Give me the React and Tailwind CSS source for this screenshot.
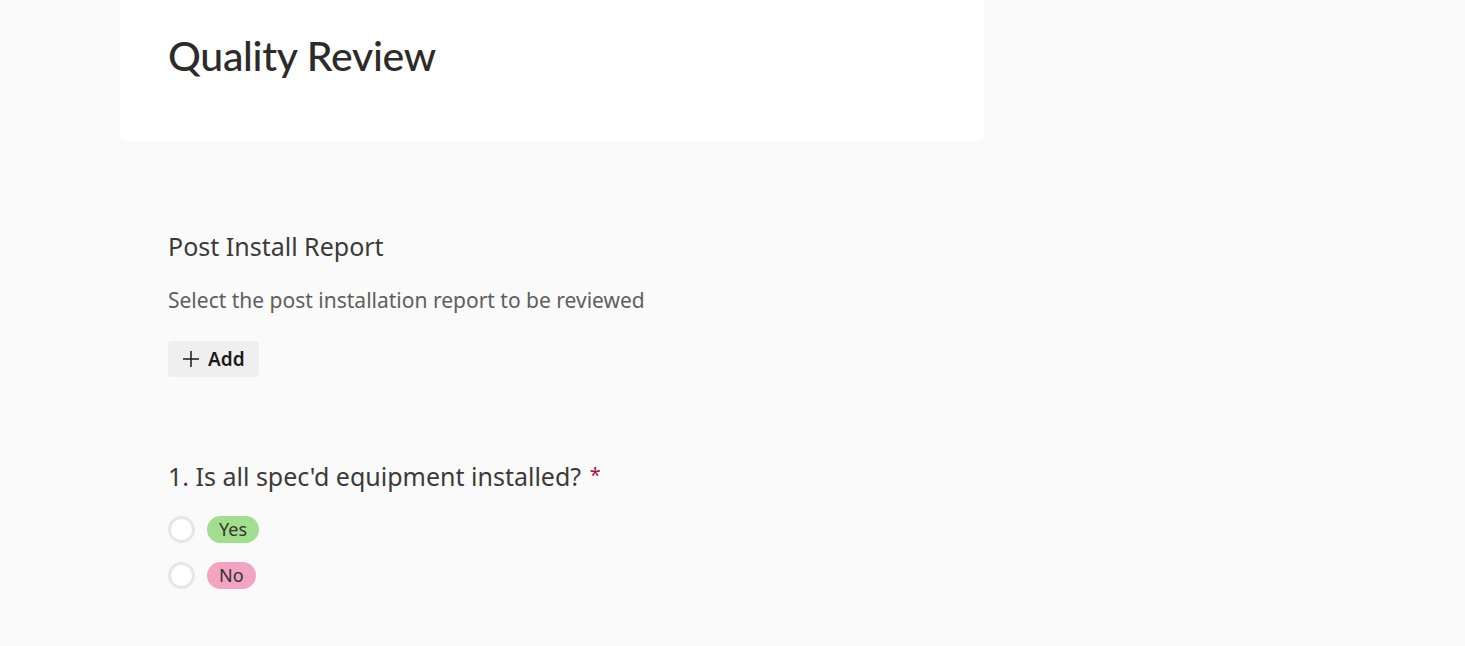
import { useState } from 'react'

const body = { fontFamily: '"Noto Sans", "Open Sans", sans-serif' }

function Choice({ label, pill, checked, onSelect }) {
  return (
    <label className="flex items-center gap-[12px] cursor-pointer h-[28px]" onClick={onSelect}>
      <span className="w-[27px] h-[27px] rounded-full border-[3px] border-[#e6e6e6] bg-white flex items-center justify-center">
        {checked && <span className="w-[11px] h-[11px] rounded-full bg-[#444]" />}
      </span>
      <span className={`px-[12px] h-[27px] rounded-full text-[18px] leading-[27px] text-[#333] ${pill}`}>
        {label}
      </span>
    </label>
  )
}

export default function App() {
  const [answer, setAnswer] = useState(null)

  return (
    <div className="min-h-screen bg-[#fafafa]" style={body}>
      <div className="ml-[120px] w-[864px]">

        {/* ── Header card ─────────────────────────────── */}
        <div className="bg-white rounded-b-lg h-[141px] pl-[48px] pt-[29px]">
          <h1
            className="text-[41px] leading-[54px] font-medium text-[#2d2b2a] tracking-[-0.3px]"
            style={{ fontFamily: 'Lato, "Noto Sans", sans-serif' }}
          >
            Quality Review
          </h1>
        </div>

        {/* ── Post install report ─────────────────────── */}
        <div className="pl-[48px] pt-[88px]">
          <h2 className="text-[25px] leading-[34px] text-[#3b3a39]">Post Install Report</h2>
          <p className="mt-[23px] text-[21px] leading-[28px] text-[#605e5c]">
            Select the post installation report to be reviewed
          </p>
          <button className="mt-[27px] h-[36px] px-[14px] flex items-center gap-[8px] bg-[#efefef] rounded text-[19px] font-semibold text-[#1b1b1b]">
            <svg width="18" height="18" viewBox="0 0 18 18" fill="none" stroke="#1b1b1b" strokeWidth="1.5">
              <path d="M9 1v16M1 9h16" />
            </svg>
            Add
          </button>

          {/* ── Question 1 ───────────────────────────── */}
          <div className="mt-[82px]">
            <h3 className="text-[25px] leading-[34px] text-[#3b3a39]">
              1. Is all spec'd equipment installed?{' '}
              <span className="text-[20px] align-top relative top-[-1px] ml-[2px] text-[#a4123f]">*</span>
            </h3>
            <div className="mt-[22px] flex flex-col gap-[18px]">
              <Choice label="Yes" pill="bg-[#a1df8e]" checked={answer === 'yes'} onSelect={() => setAnswer('yes')} />
              <Choice label="No" pill="bg-[#f3a4c1]" checked={answer === 'no'} onSelect={() => setAnswer('no')} />
            </div>
          </div>
        </div>
      </div>
    </div>
  )
}
